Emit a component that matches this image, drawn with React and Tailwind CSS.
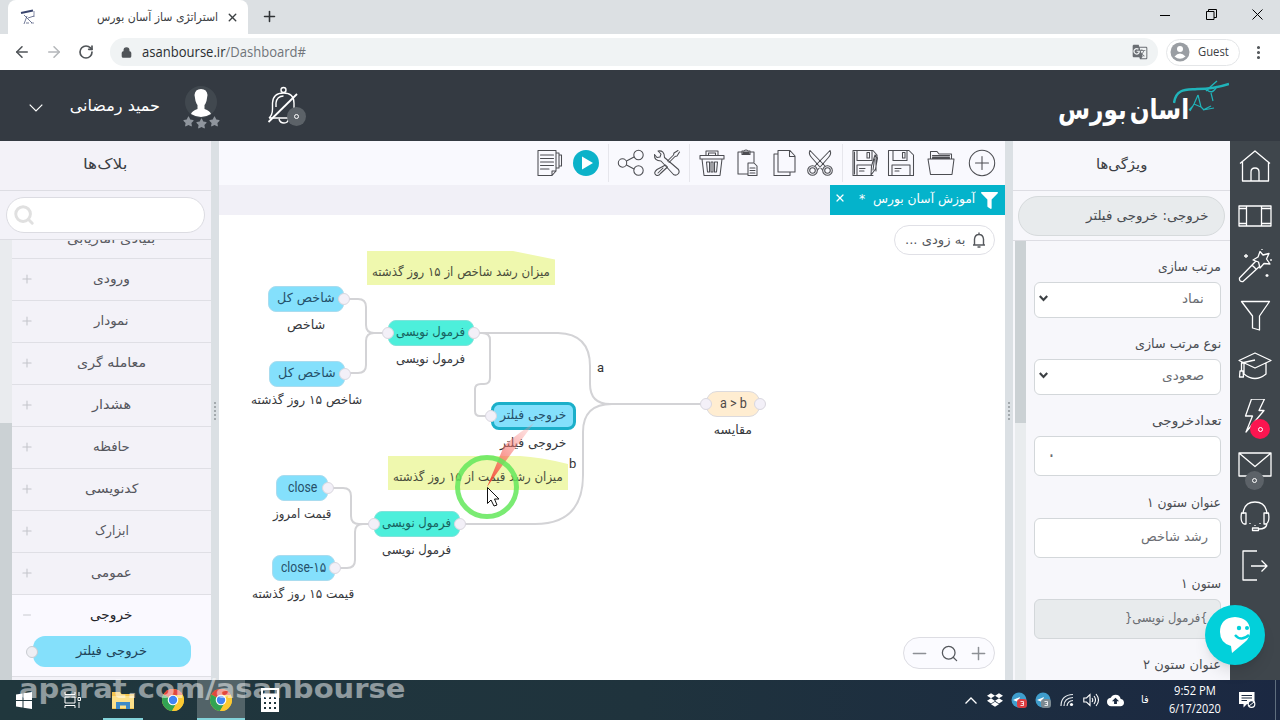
import React, { useLayoutEffect, useRef } from 'react';
import { ArrowLeft, ArrowRight, RotateCw, Lock, Plus, X, Minus, Search, EllipsisVertical } from 'lucide-react';
import { FaStar, FaDropbox, FaFilter } from 'react-icons/fa';
import { MdCloudUpload, MdGTranslate } from 'react-icons/md';
import clsx from 'clsx';

// Squeezes a single line of text into a box of the given width
const Fit = ({ w, ltr, className, children }) => {
  const ref = useRef(null);

  useLayoutEffect(() => {
    const el = ref.current;
    el.style.transform = `scaleX(${w / el.offsetWidth})`;
  }, [w, children]);

  return (
    <span
      dir={ltr ? 'ltr' : 'rtl'}
      className={clsx('block shrink-0 whitespace-nowrap', className)}
      style={{ width: w }}
    >
      <span ref={ref} className={clsx('inline-block', ltr ? 'origin-left' : 'origin-right')}>
        {children}
      </span>
    </span>
  );
};

const Svg = ({ size = 28, sw = 1.05, className, children }) => (
  <svg
    width={size}
    height={size}
    viewBox="0 0 28 28"
    fill="none"
    stroke="currentColor"
    strokeWidth={sw}
    strokeLinejoin="round"
    strokeLinecap="round"
    className={className}
  >
    {children}
  </svg>
);

const Chrome = () => (
  <svg width="22" height="22" viewBox="0 0 22 22">
    <circle cx="11" cy="11" r="11" fill="#fbc932" />
    <path d="M11 11 L1.5 5.5 A11 11 0 0 1 20.6 5.8 Z" fill="#e2483c" />
    <path d="M11 11 L1.5 5.5 A11 11 0 0 0 10 22 L15 13 Z" fill="#32a453" />
    <path d="M11 6 H20.7 A11 11 0 0 1 10 22 L15.5 13 Z" fill="#fbc932" />
    <circle cx="11" cy="11" r="5.3" fill="#fff" />
    <circle cx="11" cy="11" r="4.2" fill="#4285f4" />
  </svg>
);

const BrowserBar = () => (
  <>
    <div className="h-[34px] bg-[#dce0e3] flex items-end justify-between">
      <div className="flex items-end h-full">
        <div className="ml-2 w-[240px] h-[34px] bg-white rounded-t-lg flex items-center pl-3">
          <svg width="17" height="17" viewBox="0 0 17 17" fill="none" stroke="#39456e">
            <path d="M1 4 L13 1.5" strokeWidth="2" />
            <path d="M4 6 L12 14 M7 7 L4 15 M8 9 L14 7 M6 14 H9" strokeWidth="1" opacity=".7" />
            <path d="M14 2 V8 M14 14 H11" strokeWidth="1" opacity=".6" />
          </svg>
          <Fit w={121} className="ml-[60px] text-[12px] text-[#3c4043]">استراتژی ساز آسان بورس</Fit>
          <X size={13} strokeWidth={2.6} className="ml-2 text-[#3c4043]" />
        </div>
        <Plus size={17} strokeWidth={2.2} className="ml-[13px] mb-[9px] text-[#303336]" />
      </div>
      <div className="flex items-center h-[28px] gap-[35px] pr-[17px] self-start text-black">
        <svg width="11" height="11" stroke="currentColor"><path d="M0 6.5 H10" /></svg>
        <svg width="11" height="11" fill="none" stroke="currentColor">
          <path d="M.5 2.5 H8 V10.5 H.5 Z M2.5 2.5 V.5 H10.5 V8.5 H8" />
        </svg>
        <svg width="11" height="11" stroke="currentColor"><path d="M.5 .5 L10.5 10.5 M10.5 .5 L.5 10.5" /></svg>
      </div>
    </div>
    <div className="h-[36px] bg-white flex items-center pl-[13px] text-[#505458]">
      <ArrowLeft size={18} strokeWidth={2.1} />
      <ArrowRight size={18} strokeWidth={2.1} className="ml-[14px] text-[#b4b7ba]" />
      <RotateCw size={16} strokeWidth={2.5} className="ml-[15px]" />
      <div className="ml-[16px] w-[1048px] h-[28px] rounded-full bg-[#f0f3f4] flex items-center pl-[11px] pr-[10px]">
        <Lock size={11} strokeWidth={3} className="fill-current" />
        <Fit ltr w={164} className="ml-[10px] -mt-px font-['Open_Sans'] text-[14px] text-[#70757a]">
          <span className="text-[#2b2e31]">asanbourse.ir</span>/Dashboard#
        </Fit>
        <MdGTranslate size={16} className="ml-auto text-[#6a6e73]" />
      </div>
      <div className="ml-[8px] w-[74px] h-[27px] rounded-full border border-[#e4e6e8] flex items-center pl-[3px]">
        <svg width="20" height="20" viewBox="0 0 20 20">
          <circle cx="10" cy="10" r="9.5" fill="#9a9ea3" />
          <circle cx="10" cy="7" r="3" fill="#fff" />
          <path d="M4.5 14.5 Q10 8.5 15.5 14.5 Q10 19 4.5 14.5" fill="#fff" />
        </svg>
        <Fit ltr w={31} className="ml-[8px] font-['Open_Sans'] text-[12px] text-[#3c4043]">Guest</Fit>
      </div>
      <EllipsisVertical size={17} strokeWidth={2.4} className="ml-[10px]" />
    </div>
  </>
);

const Header = () => (
  <header className="h-[71px] bg-[#343a42] flex items-center text-white">
    <svg width="14" height="8" className="ml-[29px] mt-[4px]" fill="none" stroke="currentColor" strokeWidth="1.2">
      <path d="M.7 .7 L7 7 L13.3 .7" />
    </svg>
    <Fit w={90} className="ml-[27px] text-[16px]">حمید رمضانی</Fit>
    <div className="ml-[22px] w-[38px] flex flex-col items-center pt-[4px]">
      <svg width="32" height="32" viewBox="0 0 32 32" className="-mb-[2px]">
        <circle cx="16" cy="16" r="16" fill="#41484f" />
        <path d="M9.500 9 Q10 3 16 3 Q22 3 22.500 9 L21.500 15 Q20.500 18 19.500 19 V23 Q25 25 26 28 Q16 34 6 28 Q7 25 12.500 23 V19 Q11.500 18 10.500 15 Z" fill="#fff" />
      </svg>
      <div className="flex gap-[2px] text-[#8f959d]">
        <FaStar size={11} />
        <FaStar size={11} className="mt-[2px]" />
        <FaStar size={11} />
      </div>
    </div>
    <div className="relative ml-[47px] w-[40px] h-[42px]">
      <svg width="34" height="40" viewBox="0 0 34 40" fill="none" stroke="currentColor" strokeWidth="1.4">
        <circle cx="16.500" cy="5" r="2.500" />
        <path d="M2 33 Q5.500 30 5.500 24 V18 Q6 8 16.500 8 Q27 8 27 18 V26 Q28 31 31 33 H2 M12 34 Q13 38 17 38 Q21 38 21.500 34" />
        <path d="M9 22 V18 Q10 11 16.500 11" />
        <path d="M1.500 37 L30 9" strokeWidth="1.800" />
      </svg>
      <span className="absolute left-[20px] top-[22px] size-[19px] rounded-full bg-[#5c6268] flex items-center justify-center">
        <span className="size-[5px] rounded-full border-[1.5px] border-white" />
      </span>
    </div>
    <div className="ml-auto mr-[51px] flex items-start h-[52px]">
      <Fit w={131} className="mt-[8px] text-[28px] leading-[44px] font-bold [word-spacing:-6px]">اسان بورس</Fit>
      <svg width="56" height="34" viewBox="0 0 56 34" className="-ml-[16px]" fill="none" stroke="#20b3ba">
        <path d="M1 23 C3 8 14 10 24 9 C36 9 44 8 56 4" strokeWidth="2.400" />
        <path d="M33 11 Q37 7 44 1 M34 10 Q40 15 44 6" strokeWidth="1.400" />
        <path d="M25 15 L21 24 L17 31 M25 15 L28 27 L31 30 M38 13 L40 21 M38 26 L30 30 L41 28 M21 24 L28 27 M16 30 L20 26" strokeWidth="1.200" />
      </svg>
    </div>
  </header>
);

const blocks = [
  { name: 'ورودی', w: 37 },
  { name: 'نمودار', w: 35 },
  { name: 'معامله گری', w: 69 },
  { name: 'هشدار', w: 39 },
  { name: 'حافظه', w: 37 },
  { name: 'کدنویسی', w: 53 },
  { name: 'ابزارک', w: 34 },
  { name: 'عمومی', w: 41 },
];

const Grip = () => (
  <div className="w-[8px] shrink-0 bg-[#dbe0e4] flex flex-col items-center justify-center gap-[2px]">
    {[0, 1, 2, 3, 4].map(i => (
      <span key={i} className="size-[2px] bg-[#a3a9ad]" />
    ))}
  </div>
);

const BlocksPanel = () => (
  <aside className="w-[211px] shrink-0 bg-[#f3f2f8] flex flex-col">
    <div className="h-[50px] shrink-0 border-b border-[#dddde3] flex items-center justify-center pb-[3px]">
      <Fit w={44} className="text-[14px] text-[#3b3e44]">بلاک‌ها</Fit>
    </div>
    <div className="h-[49px] shrink-0 border-b border-[#dddde3] flex items-center pl-[6px]">
      <div className="w-[199px] h-[36px] rounded-full bg-white border border-[#dcdce2] flex items-center pl-[6px]">
        <Search size={22} strokeWidth={3.2} className="text-[#e0e0e0]" />
      </div>
    </div>
    <div className="flex-1 min-h-0 flex">
      <div className="w-[12px] bg-[#e9ebee] flex flex-col justify-end">
        <div className="h-[257px] bg-[#cbd1d4]" />
      </div>
      <div className="flex-1 flex flex-col overflow-hidden">
        {/* scrolled half out of view */}
        <div className="h-[19px] shrink-0 border-b border-[#dfdfe5] flex items-end overflow-hidden pb-[10px] justify-center">
          <Fit w={88} className="text-[13px] text-[#5b5c63]">بنیادی آماریابی</Fit>
        </div>
        {blocks.map(b => (
          <div key={b.name} className="h-[42px] shrink-0 border-b border-[#dfdfe5] flex items-center pb-[2px]">
            <Plus size={14} strokeWidth={1.8} className="ml-[8px] text-[#c3c4ca]" />
            <div className="flex-1 flex justify-center pr-[22px]">
              <Fit w={b.w} className="text-[13px] text-[#55565d]">{b.name}</Fit>
            </div>
          </div>
        ))}
        <div className="h-[82px] shrink-0 bg-[#faf9ff] border-b border-[#dfdfe5]">
          <div className="h-[39px] flex items-center">
            <Minus size={12} strokeWidth={1.8} className="ml-[9px] text-[#c3c4ca]" />
            <div className="flex-1 flex justify-center pr-[22px]">
              <Fit w={42} className="text-[13px] text-[#222329]">خروجی</Fit>
            </div>
          </div>
          <div className="relative mt-[2px] ml-[21px] w-[158px] h-[31px] rounded-xl bg-[#84e0fb] flex items-center justify-center pb-[2px]">
            <span className="absolute -left-[7px] top-[10px] size-[12px] rounded-full bg-[#eeeef3] border border-[#c9ccd1]" />
            <Fit w={71} className="text-[13px] text-[#20445a]">خروجی فیلتر</Fit>
          </div>
        </div>
      </div>
    </div>
  </aside>
);

const tools = {
  note: (
    <Svg className="translate-x-px">
      <path d="M2 1.500 H20 V22 L16 26.500 H2 Z M20 22 H16 V26.500 M20 4 H23 V19 H20 M23 6 H25.500 V17 H23 M4.500 6 H17.500 M4.500 9.500 H17.500 M4.500 13 H17.500 M4.500 16.500 H17.500 M4.500 20 H13" />
    </Svg>
  ),
  play: (
    <svg width="26" height="26" viewBox="0 0 26 26">
      <circle cx="13" cy="13" r="13" fill="#0cb2c9" />
      <path d="M9 6.500 L20 13 L9 19.500 Z" fill="#fff" />
    </svg>
  ),
  share: (
    <Svg>
      <circle cx="5.500" cy="14" r="4.200" />
      <circle cx="21.500" cy="6" r="4.700" />
      <circle cx="21.500" cy="21.500" r="4.700" />
      <path d="M9.500 12 L17 8 M9.500 16 L17 20" />
    </Svg>
  ),
  wrench: (
    <Svg>
      <path d="M5 2 L8 5 L7 8 L4 8.500 L1.500 5.500 Q1 12 8 12 L20.500 25.500 Q23 27 25 25 Q27 23 25.500 20.500 L11.500 8.500 Q11.500 1 5 2 Z" />
      <path d="M25 1.500 L21 4 L20.500 6 L14.500 12 M26.500 3 L24 7 L22 7.500 L16 13.500 M12.500 16 L4 20.500 Q0 24 3 26 Q5.500 27.500 7.500 24.500 L14.500 18 Z M10 19 L5 24" />
    </Svg>
  ),
  trash: (
    <Svg>
      <path d="M2 6.500 H26 V10 H2 Z M8 6.500 V2 H20 V6.500 M10.500 6.500 V4 H17.500 V6.500 M4 10 L6 26.500 H22 L24 10" />
      <path d="M8.500 13 L9.500 23 H11.500 V13 Z M13 13 V23 H15 V13 Z M16.500 13 V23 H18.500 L19.500 13 Z" />
    </Svg>
  ),
  paste: (
    <Svg>
      <path d="M14 25 H4 V3 H8 M16 3 H20 V13 M8 2 H10 Q12 0 14 2 H16 V5.500 H8 Z M14 14 H20 L23 17 V26.500 H14 Z M16 19 H21 M16 21.500 H21 M16 24 H21" />
      <path d="M9 3 H15 V5 H9 Z" fill="currentColor" />
    </Svg>
  ),
  copy: (
    <Svg>
      <path d="M8 1.500 H20 L25 7 V23 H8 Z M19.500 1.500 V7.500 H25 M8 5 H4 V26.500 H20 V23" />
    </Svg>
  ),
  cut: (
    <Svg>
      <circle cx="6.500" cy="21.500" r="4.800" />
      <circle cx="6.500" cy="21.500" r="2.800" />
      <circle cx="21.500" cy="21.500" r="4.800" />
      <circle cx="21.500" cy="21.500" r="2.800" />
      <path d="M4 1.500 Q2 5 6 9 L16.500 21 M4 1.500 L19 17 M24 1.500 Q26 5 22 9 L11.500 21 M24 1.500 L9 17" />
    </Svg>
  ),
  saveAs: (
    <Svg>
      <path d="M22 26.500 H2 V1.500 H22 L26 6 V10 M6 1.500 V11.500 H21 V1.500 M16 3.500 H18.500 V9 H16 Z M6 26.500 V16 H20 M8.500 19.500 H14 M8.500 22 H13 M3.500 3 V25" />
      <path d="M24 6 L26.500 9 L24.500 20 L20 26 L20.500 17 Z M23.500 10 L22 21 M25 6 V22" />
    </Svg>
  ),
  save: (
    <Svg>
      <path d="M1.500 1.500 H22 L26.500 6 V26.500 H1.500 Z M6 1.500 V11.500 H20 V1.500 M15.500 3.500 H18 V9 H15.500 Z M5 26.500 V16 H23 V26.500 M8 19.500 H14 M8 22 H12" />
    </Svg>
  ),
  folder: (
    <Svg>
      <path d="M1 10 H27 L25 25.500 H3.500 Z M3.500 10 V2.500 H10 L12 5 H24.500 V10 M5.500 8 H22.500 M5.500 6.500 H22.500 M5.500 9 H22.500" />
    </Svg>
  ),
  add: (
    <Svg>
      <circle cx="14" cy="14" r="12.700" />
      <path d="M14 7.500 V20.500 M7.500 14 H20.500" />
    </Svg>
  ),
};

const Tool = ({ name, className }) => (
  <button className={clsx('w-[36px] flex justify-center', className)}>{tools[name]}</button>
);

const Sep = () => <span className="w-px h-[38px] mx-[4px] bg-[#e6e6ec]" />;

// Coordinates are local to the canvas; tw is the caption width inside the block
const nodes = [
  { id: 1, x: 49, y: 71, w: 76, text: 'شاخص کل', tw: 58, label: 'شاخص', lw: 38, color: 'blue', out: true },
  { id: 2, x: 50, y: 146, w: 76, text: 'شاخص کل', tw: 58, label: 'شاخص ۱۵ روز گذشته', lw: 111, color: 'blue', out: true },
  { id: 3, x: 169, y: 105, w: 86, text: 'فرمول نویسی', tw: 69, label: 'فرمول نویسی', lw: 69, color: 'green', in: true, out: true },
  { id: 4, x: 272, y: 188, w: 85, text: 'خروجی فیلتر', tw: 66, label: 'خروجی فیلتر', lw: 66, color: 'selected', in: true },
  { id: 5, x: 57, y: 260, w: 52, text: 'close', tw: 29, label: 'قیمت امروز', lw: 58, color: 'blue', out: true, ltr: true },
  { id: 6, x: 53, y: 340, w: 63, text: 'close-۱۵', tw: 45, label: 'قیمت ۱۵ روز گذشته', lw: 102, color: 'blue', out: true, ltr: true },
  { id: 7, x: 155, y: 296, w: 86, text: 'فرمول نویسی', tw: 69, label: 'فرمول نویسی', lw: 69, color: 'green', in: true, out: true },
  { id: 8, x: 487, y: 176, w: 54, text: 'a > b', tw: 27, label: 'مقایسه', lw: 38, color: 'cream', in: true, out: true, ltr: true },
];

const nodeColors = {
  blue: 'bg-[#84e0fc] border border-[#a9dcef] text-[#24506a]',
  green: 'bg-[#4defdb] border border-[#7fe3da] text-[#17615e]',
  selected: 'bg-[#84e0fc] border-[3px] border-[#1bafc9] text-[#24506a]',
  cream: 'bg-[#ffedd1] border border-[#dcdadd] text-[#4f4a48]',
};

const Port = ({ className }) => (
  <span className={clsx('absolute top-[7px] size-[12px] rounded-full bg-[#f3f0f8] border border-[#d9d7df]', className)} />
);

const Node = ({ n }) => (
  <div className="absolute flex flex-col items-center" style={{ left: n.x, top: n.y, width: n.w }}>
    <div
      className={clsx(
        'relative w-full flex items-center justify-center pb-[2px]',
        n.color === 'selected' ? 'h-[28px] -mt-px' : 'h-[26px]',
        n.color === 'cream' ? 'rounded-[11px]' : 'rounded-lg',
        nodeColors[n.color]
      )}
    >
      <Fit w={n.tw} ltr={n.ltr} className={n.ltr ? "font-['Roboto','DejaVu_Sans'] text-[14px] font-normal" : 'text-[12.5px]'}>
        {n.text}
      </Fit>
    </div>
    {n.in && <Port className="-left-[6px]" />}
    {n.out && <Port className="-right-[6px]" />}
    <Fit w={n.lw} className="mt-[3px] text-[12.5px] leading-[20px] text-[#36383c]">{n.label}</Fit>
  </div>
);

const Canvas = () => (
  <div className="relative flex-1 bg-white overflow-hidden">
    <svg className="absolute inset-0" width="786" height="465" viewBox="219 215 786 465" fill="none">
      <path d="M367 251 H513 L555 259.500 V285 H367 Z M388 456 H520 Q540 457 568 464 V490 H388 Z" fill="#eff8ae" />
      <g stroke="#d3d3d6" strokeWidth="2">
        <path d="M344 299 H358 Q366 299 366 307 V325 Q366 333 374 333 H387" />
        <path d="M345 373 H358 Q366 373 366 365 V341 Q366 333 374 333" />
        <path d="M475 333 H558 Q590 334 590 366 V384 Q590 404 610 404 H706" />
        <path d="M482 333 Q490 333 490 340 V378 Q490 384 484 384 H481 Q475 384 475 389 V411 Q475 416 480 416 H490" />
        <path d="M328 488 H343 Q351 488 351 496 V516 Q351 524 359 524 H374" />
        <path d="M335 568 H347 Q355 568 355 560 V532 Q355 524 363 524" />
        <path d="M461 524 H535 Q583 524 583 475 V432 Q583 404 612 404" />
      </g>
    </svg>
    <Fit w={178} className="absolute left-[153px] top-[47px] text-[12.5px] leading-[20px] text-[#4a4d3c]">
      میزان رشد شاخص از ۱۵ روز گذشته
    </Fit>
    <Fit w={170} className="absolute left-[174px] top-[252px] text-[12.5px] leading-[20px] text-[#4a4d3c]">
      میزان رشد قیمت از ۱۵ روز گذشته
    </Fit>
    <span className="absolute left-[378px] top-[143px] font-['Roboto'] text-[13px] text-[#333]">a</span>
    <span className="absolute left-[350px] top-[239px] font-['Roboto'] text-[13px] text-[#333]">b</span>
    {nodes.map(n => (
      <Node key={n.id} n={n} />
    ))}

    {/* Pointer with its click ring */}
    <svg className="absolute inset-0" width="786" height="465" viewBox="219 215 786 465" fill="none">
      <defs>
        <linearGradient id="trail" x1="0" y1="1" x2=".7" y2="0">
          <stop offset="0" stopColor="#f4422f" />
          <stop offset="1" stopColor="#f98d8d" stopOpacity=".3" />
        </linearGradient>
      </defs>
      <path d="M487 487 L504 446 Q514 436 534 423 L502 466 Z" fill="url(#trail)" />
      <circle cx="487" cy="487" r="29.500" stroke="#63e75a" strokeOpacity=".85" strokeWidth="5" />
      <path d="M487.500 487.500 V503.500 L491 500 L494 506 L497 505 L494.500 499 H499 Z" fill="#fff" stroke="#111" />
    </svg>

    <div className="absolute left-[675px] top-[10px] w-[101px] h-[30px] rounded-full border border-[#e0e0e6] flex items-center pl-[10px]">
      <Fit w={60} className="text-[12.500px] text-[#55585d]">به زودی ...</Fit>
      <svg width="14" height="16" viewBox="0 0 14 16" className="ml-[7px]" fill="none" stroke="#55585d" strokeWidth="1.400">
        <path d="M1 13 H13 M2.500 13 V7 Q3 2.500 7 2.500 Q11 2.500 11.500 7 V13 M7 .5 V2.500 M5.500 15 H8.500" />
      </svg>
    </div>
    <div className="absolute left-[684px] top-[422px] w-[92px] h-[32px] rounded-full bg-[#fbfbff] border border-[#dddde3] flex items-center justify-between px-[5px] text-[#8d9095]">
      <Minus size={21} strokeWidth={1.700} />
      <Search size={19} strokeWidth={1.600} className="text-[#55585d]" />
      <Plus size={21} strokeWidth={1.700} />
    </div>
  </div>
);

const Editor = () => (
  <main className="flex-1 flex flex-col bg-[#f9f9fe]">
    <div className="h-[44px] shrink-0 flex items-center justify-end pr-[5px] text-[#4c4d52]">
      <Tool name="note" />
      <Tool name="play" className="ml-px" />
      <Sep />
      <Tool name="share" />
      <Tool name="wrench" />
      <Sep />
      <Tool name="trash" />
      <Tool name="paste" />
      <Tool name="copy" />
      <Tool name="cut" />
      <Sep />
      <Tool name="saveAs" />
      <Tool name="save" />
      <Tool name="folder" className="ml-[4px]" />
      <Tool name="add" className="ml-[5px]" />
    </div>
    <div className="h-[30px] shrink-0 bg-[#f1f0f7] flex justify-end">
      <div className="w-[175px] bg-[#04b3cb] text-white flex items-center pl-[4px]">
        <X size={12} strokeWidth={2.400} className="mb-[5px]" />
        <Fit w={116} className="ml-[13px] mb-[2px] text-[12.500px]">آموزش آسان بورس &nbsp;*</Fit>
        <FaFilter size={17} className="ml-[6px]" />
      </div>
    </div>
    <Canvas />
  </main>
);

const Field = ({ label, lw, value, vw, select, muted, left }) => (
  <div className="mt-[14px]">
    <div className="h-[24px] mb-[3px] flex items-center justify-end">
      <Fit w={lw} className="text-[13px] text-[#4a4d52]">{label}</Fit>
    </div>
    {value && (
      <div
        className={clsx(
          'w-[187px] rounded-md border border-[#d3d7da] flex items-center pb-[3px]',
          select ? 'h-[36px] pl-[4px] pr-[16px]' : 'h-[40px] px-[12px]',
          muted ? 'bg-[#e8ebed]' : 'bg-white',
          left ? 'justify-start' : 'justify-between'
        )}
      >
        {select ? (
          <svg width="9" height="7" fill="none" stroke="#3c4044" strokeWidth="2.200">
            <path d="M.8 1 L4.500 5 L8.200 1" />
          </svg>
        ) : (
          !left && <span />
        )}
        <Fit w={vw} className={clsx('text-[#6a6d72]', left ? 'text-[22px]' : 'text-[13px]')}>{value}</Fit>
      </div>
    )}
  </div>
);

const PropertiesPanel = () => (
  <aside className="w-[217px] shrink-0 bg-[#f7f7fb] flex flex-col">
    <div className="h-[50px] shrink-0 border-b border-[#dddde3] flex items-center justify-center pb-[3px]">
      <Fit w={51} className="text-[14px] text-[#3b3e44]">ویژگی‌ها</Fit>
    </div>
    <div className="h-[50px] shrink-0 border-b border-[#dddde3] pt-[5px] pl-[5px]">
      <div className="w-[207px] h-[40px] rounded-full bg-[#e8ebed] border border-[#d6dadc] flex items-center justify-end pr-[16px] pb-[2px]">
        <Fit w={122} className="text-[13.500px] text-[#494c51]">خروجی: خروجی فیلتر</Fit>
      </div>
    </div>
    <div className="flex-1 min-h-0 flex overflow-hidden">
      <div className="ml-[2px] w-[11px] bg-[#e9ecee]">
        <div className="h-[182px] bg-[#cbd1d4]" />
      </div>
      <div className="pl-[8px] pr-[9px]">
        <Field label="مرتب سازی" lw={63} value="نماد" vw={22} select />
        <Field label="نوع مرتب سازی" lw={86} value="صعودی" vw={42} select />
        <Field label="تعدادخروجی" lw={69} value="۰" vw={9} left />
        <div className="h-px" />
        <Field label="عنوان ستون ۱" lw={74} value="رشد شاخص" vw={67} />
        <Field label="ستون ۱" lw={40} value="}فرمول نویسی{" vw={83} muted />
        <Field label="عنوان ستون ۲" lw={78} />
      </div>
    </div>
  </aside>
);

const navIcons = [
  <path key="home" d="M2 14.500 L17 2 L32 14.500 M4.500 13 V32 H30.500 V13 M13 32 V23 Q13 19 17 19 Q21 19 21 23 V32" />,
  <path key="film" d="M1 7 H33 V27 H1 Z M8.500 7 V27 M23.500 7 V27 M1 9.500 H8.500 M23.500 9.500 H33 M1 24.500 H8.500 M23.500 24.500 H33" />,
  <g key="wand">
    <path d="M18 12 L1.500 29 Q1 33 5 32.500 L22 17 M14 16 L18 20 M22 2.500 L25 6 L31 4.500 L28.500 10 L32 15 L26 14.500 L22 19 L20.500 13 L15 11 L20 8 Z" />
    <path d="M8 5 V9 M6 7 H10 M24 0 V1 M33 10 V12 M29 25 V28 M27.500 26.500 H30.500" />
  </g>,
  <path key="funnel" d="M3.500 2.500 H31.500 L21.500 17 V31 L14.500 29 V17 Z" />,
  <path key="cap" d="M1 11.500 L17 4 L33 11.500 L17 19 Z M6 14 V25 Q17 34 28 25 V14 M17 11 L3.500 14 V22 M2 22 L1.500 28 H5.500 L5 22 Z" />,
  <path key="bolt" d="M13.500 0 H26.500 L21 11.500 H26 L8 33 L14.500 17 H7.500 Z" />,
  <path key="mail" d="M1 4 H33 V27 H1 Z M1 4 L17 17.500 L33 4" />,
  <path key="support" d="M5 15 Q6 3 17 3 Q28 3 29 15 M3.500 14 H8 V25 H6 Q2 23 3.500 14 Z M26 14 H30.500 Q32 23 28 25 H26 Z M29 25 Q28 30 21 30 M14.500 29 H20.500 V31.500 H14.500 Z M12 24 V25 M17 26 V27 M22 24 V25" />,
  <path key="exit" d="M19 2 H5 V31 H19 M13 17 H29 M23.500 11.500 L29 17 L23.500 22.500" />,
];

const NavRail = () => (
  <nav className="w-[50px] shrink-0 bg-[#3f464c] text-white">
    {navIcons.map((icon, i) => (
      <div key={i} className="relative h-[50px] flex items-center justify-center">
        <svg width="34" height="34" viewBox="0 0 34 34" fill="none" stroke="currentColor" strokeWidth="1.300" strokeLinejoin="round">
          {icon}
        </svg>
        {i === 5 && (
          <span className="absolute left-[20px] top-[28px] size-[20px] rounded-full bg-[#fb1550] flex items-center justify-center">
            <span className="size-[5px] rounded-full border-[1.500px] border-white" />
          </span>
        )}
        {i === 6 && (
          <span className="absolute left-[15px] top-[30px] size-[19px] rounded-full bg-[#5c6268] flex items-center justify-center">
            <span className="size-[5px] rounded-full border-[1.500px] border-white" />
          </span>
        )}
      </div>
    ))}
  </nav>
);

const TelegramTray = ({ badge }) => (
  <svg width="17" height="17" viewBox="0 0 17 17">
    <circle cx="8" cy="8" r="7.500" fill="#3f9dcc" />
    <path d="M2 8 L9 5 L7 10 Z" fill="#fff" />
    <rect x="6" y="7" width="10" height="9" rx="3" fill={badge} />
    <path d="M9.500 9.500 H12.500 V13.500 H9.500 M10.500 11.500 H12.500" fill="none" stroke="#fff" strokeWidth=".8" />
  </svg>
);

const Taskbar = () => (
  <footer className="relative h-[40px] bg-linear-to-r from-[#20373d] via-[#1f333d] to-[#1b2842] flex text-white">
    <div className="w-[48px] flex items-center justify-center">
      <svg width="16" height="17" viewBox="0 0 16 17" fill="#fff">
        <path d="M0 2.500 L6.500 1.500 V8 H0 Z M7.500 1.300 L16 0 V8 H7.500 Z M0 9 H6.500 V15.500 L0 14.500 Z M7.500 9 H16 V17 L7.500 15.700 Z" />
      </svg>
    </div>
    <div className="w-[48px] flex items-center justify-center">
      <svg width="17" height="16" viewBox="0 0 17 16" fill="none" stroke="#fff">
        <path d="M1 0 V2.500 H11 V0 M1 5 H11 V11 H1 Z M1 16 V13.500 H11 V16 M15 0 V4 M15 10 V16 M14 5.500 H16.500 V8.500 H14 Z" />
      </svg>
    </div>
    <div className="w-[53px] flex items-center justify-center relative">
      <svg width="22" height="19" viewBox="0 0 22 19">
        <path d="M0 1 H8 L9.500 3 H22 V18 H0 Z" fill="#f4c550" />
        <path d="M0 5 H22 V17 H0 Z" fill="#fde08a" />
        <path d="M4 18 V11 H18 V18 H14 V14.500 H8 V18 Z" fill="#3d8ac9" />
      </svg>
      <span className="absolute bottom-0 left-[7px] w-[40px] h-[2px] bg-[#83d3da]" />
    </div>
    <div className="w-[48px] flex items-center justify-center"><Chrome /></div>
    <div className="w-[48px] flex items-center justify-center bg-[#526368] border-b-2 border-[#83d3da] pt-[2px]"><Chrome /></div>
    <div className="w-[50px] flex items-center justify-center">
      <svg width="18" height="24" viewBox="0 0 18 24">
        <path d="M0 0 H18 V24 H0 Z" fill="#fff" />
        <path d="M2 2 H16 V5.500 H2 Z M3 9 H5 V11 H3 Z M8 9 H10 V11 H8 Z M13 9 H15 V11 H13 Z M3 14 H5 V16 H3 Z M8 14 H10 V16 H8 Z M13 14 H15 V16 H13 Z M3 19 H5 V21 H3 Z M8 19 H10 V21 H8 Z M13 19 H15 V21 H13 Z" fill="#20353c" />
      </svg>
    </div>
    <div className="ml-auto flex items-center">
      <div className="w-[24px] flex justify-center">
        <svg width="12" height="7" fill="none" stroke="#fff" strokeWidth="1.300"><path d="M.5 6.500 L6 1 L11.500 6.500" /></svg>
      </div>
      <div className="w-[24px] flex justify-center"><FaDropbox size={16} /></div>
      <div className="w-[24px] flex justify-center"><TelegramTray badge="#dc3c40" /></div>
      <div className="w-[24px] flex justify-center"><TelegramTray badge="#7d8a92" /></div>
      <div className="w-[24px] flex justify-center">
        <svg width="14" height="14" fill="none" stroke="#e5e9ec" strokeWidth="1.200">
          <path d="M1 13 Q1 2 13 1.500 M4 13 Q4 5 13 4.500 M7 13 Q7.500 8 13 7.500" />
          <circle cx="11.500" cy="11.500" r="1.600" fill="#fff" stroke="none" />
        </svg>
      </div>
      <div className="w-[24px] flex justify-center">
        <svg width="17" height="14" fill="none" stroke="#fff" strokeWidth="1.100">
          <path d="M.8 5 H3.500 L7 1.500 V12.500 L3.500 9 H.8 Z M9 5 Q10.500 7 9 9 M11 3 Q14 7 11 11 M13 1 Q18 7 13 13" />
        </svg>
      </div>
      <div className="w-[24px] flex justify-center"><MdCloudUpload size={17} /></div>
      <div className="w-[36px] flex justify-center"><Fit w={8} className="text-[11px]">فا</Fit></div>
      <div className="w-[64px] flex flex-col items-center font-['Open_Sans'] text-[12px] leading-[18px]">
        <Fit ltr w={42}>9:52 PM</Fit>
        <Fit ltr w={52}>6/17/2020</Fit>
      </div>
      <div className="w-[40px] flex justify-center">
        <svg width="17" height="17" viewBox="0 0 17 17">
          <path d="M0 0 H15.500 V12 H8 L4.500 15.500 V12 H0 Z" fill="#fff" />
          <path d="M2.500 3.500 H13 M2.500 6 H13 M2.500 8.500 H8" stroke="#1b2a40" />
          <circle cx="12.500" cy="12" r="3.300" fill="#1b2a40" stroke="#fff" strokeWidth="1.200" />
          <path d="M10 14 L15 10" stroke="#fff" />
        </svg>
      </div>
      <span className="ml-[8px] mr-[4px] w-px h-[40px] bg-[#5f6e7e]" />
    </div>
    <Fit ltr w={387} className="absolute left-[19px] -top-[7px] text-[27px] leading-[32px] font-bold text-white/50">
      aparat.com/asanbourse
    </Fit>
  </footer>
);

export default function App() {
  return (
    <div className="relative w-[1280px] h-[720px] overflow-hidden flex flex-col font-['DejaVu_Sans',sans-serif]">
      <BrowserBar />
      <Header />
      <div className="h-[539px] flex">
        <BlocksPanel />
        <Grip />
        <Editor />
        <Grip />
        <PropertiesPanel />
        <NavRail />
      </div>
      <Taskbar />

      {/* Chat bubble */}
      <div className="absolute left-[1205px] top-[605px] size-[60px] rounded-full bg-[#02d0da] shadow-lg flex items-center justify-center">
        <svg width="34" height="38" viewBox="0 0 34 38">
          <path d="M17 1 Q32 2 32 15 Q32 22 27 26 L14 37 L13 30 Q2 27 2 16 Q2 2 17 1 Z" fill="#fff" />
          <circle cx="21" cy="12" r="2.200" fill="#02d0da" />
          <circle cx="29" cy="12" r="2" fill="#02d0da" />
          <path d="M17 19 Q23 26 31 19" fill="none" stroke="#02d0da" strokeWidth="2.400" />
        </svg>
      </div>
    </div>
  );
}
